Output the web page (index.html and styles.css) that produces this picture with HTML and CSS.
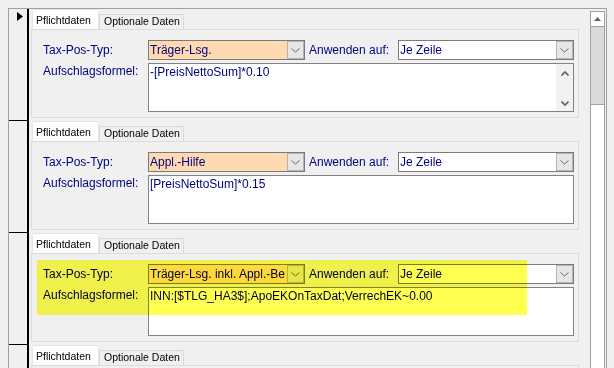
FILE: index.html
```html
<!DOCTYPE html>
<html lang="de">
<head>
    <meta charset="UTF-8">
    <title>Taxpositionen</title>
    <link rel="stylesheet" href="styles.css">
</head>
<body>
    <div class="form">
        <div class="records">

            <!-- record 1 (current) -->
            <div class="record">
                <div class="selector">
                    <svg width="6" height="9" viewBox="0 0 6 9"><polygon points="0,0 6,4.5 0,9" fill="#000"/></svg>
                </div>
                <div class="detail">
                    <div class="tabs">
                        <div class="tab active">Pflichtdaten</div>
                        <div class="tab">Optionale Daten</div>
                    </div>
                    <div class="panel">
                        <div class="line">
                            <div class="lbl">Tax-Pos-Typ:</div>
                            <div class="combo peach">
                                <span class="val">Träger-Lsg.</span>
                                <span class="drop"><svg width="9" height="5" viewBox="0 0 9 5"><polyline points="0.5,0.5 4.5,4 8.5,0.5" fill="none" stroke="#6a6a6a" stroke-width="1"/></svg></span>
                            </div>
                            <div class="lbl2">Anwenden auf:</div>
                            <div class="combo wide">
                                <span class="val">Je Zeile</span>
                                <span class="drop"><svg width="9" height="5" viewBox="0 0 9 5"><polyline points="0.5,0.5 4.5,4 8.5,0.5" fill="none" stroke="#6a6a6a" stroke-width="1"/></svg></span>
                            </div>
                        </div>
                        <div class="line">
                            <div class="lbl memo-lbl">Aufschlagsformel:</div>
                            <div class="memo">
                                <div class="txt">-[PreisNettoSum]*0.10</div>
                                <div class="bar">
                                    <svg width="8" height="5" viewBox="0 0 8 5"><polyline points="0.5,4.5 4,1 7.5,4.5" fill="none" stroke="#606060" stroke-width="1.6"/></svg>
                                    <svg width="8" height="5" viewBox="0 0 8 5"><polyline points="0.5,0.5 4,4 7.5,0.5" fill="none" stroke="#606060" stroke-width="1.6"/></svg>
                                </div>
                            </div>
                        </div>
                    </div>
                </div>
            </div>

            <!-- record 2 -->
            <div class="record">
                <div class="selector"></div>
                <div class="detail">
                    <div class="tabs">
                        <div class="tab active">Pflichtdaten</div>
                        <div class="tab">Optionale Daten</div>
                    </div>
                    <div class="panel">
                        <div class="line">
                            <div class="lbl">Tax-Pos-Typ:</div>
                            <div class="combo peach">
                                <span class="val">Appl.-Hilfe</span>
                                <span class="drop"><svg width="9" height="5" viewBox="0 0 9 5"><polyline points="0.5,0.5 4.5,4 8.5,0.5" fill="none" stroke="#6a6a6a" stroke-width="1"/></svg></span>
                            </div>
                            <div class="lbl2">Anwenden auf:</div>
                            <div class="combo wide">
                                <span class="val">Je Zeile</span>
                                <span class="drop"><svg width="9" height="5" viewBox="0 0 9 5"><polyline points="0.5,0.5 4.5,4 8.5,0.5" fill="none" stroke="#6a6a6a" stroke-width="1"/></svg></span>
                            </div>
                        </div>
                        <div class="line">
                            <div class="lbl memo-lbl">Aufschlagsformel:</div>
                            <div class="memo">
                                <div class="txt">[PreisNettoSum]*0.15</div>
                            </div>
                        </div>
                    </div>
                </div>
            </div>

            <!-- record 3 (marked) -->
            <div class="record">
                <div class="selector"></div>
                <div class="detail">
                    <div class="tabs">
                        <div class="tab active">Pflichtdaten</div>
                        <div class="tab">Optionale Daten</div>
                    </div>
                    <div class="panel">
                        <div class="line">
                            <div class="lbl">Tax-Pos-Typ:</div>
                            <div class="combo peach">
                                <span class="val">Träger-Lsg. inkl. Appl.-Be</span>
                                <span class="drop"><svg width="9" height="5" viewBox="0 0 9 5"><polyline points="0.5,0.5 4.5,4 8.5,0.5" fill="none" stroke="#6a6a6a" stroke-width="1"/></svg></span>
                            </div>
                            <div class="lbl2">Anwenden auf:</div>
                            <div class="combo wide">
                                <span class="val">Je Zeile</span>
                                <span class="drop"><svg width="9" height="5" viewBox="0 0 9 5"><polyline points="0.5,0.5 4.5,4 8.5,0.5" fill="none" stroke="#6a6a6a" stroke-width="1"/></svg></span>
                            </div>
                        </div>
                        <div class="line">
                            <div class="lbl memo-lbl">Aufschlagsformel:</div>
                            <div class="memo">
                                <div class="txt">INN:[$TLG_HA3$];ApoEKOnTaxDat;VerrechEK~0.00</div>
                            </div>
                        </div>
                        <div class="marker"></div>
                    </div>
                </div>
            </div>

            <!-- record 4 (cut off) -->
            <div class="record">
                <div class="selector"></div>
                <div class="detail">
                    <div class="tabs">
                        <div class="tab active">Pflichtdaten</div>
                        <div class="tab">Optionale Daten</div>
                    </div>
                    <div class="panel"></div>
                </div>
            </div>

        </div>

        <div class="vscroll">
            <div class="vs-up">
                <svg width="7" height="4" viewBox="0 0 7 4"><polygon points="0,4 3.5,0 7,4" fill="#606060"/></svg>
            </div>
            <div class="vs-track"></div>
            <div class="vs-thumb"></div>
        </div>
    </div>
</body>
</html>
```

FILE: styles.css
```css
/* Access-style continuous form: one record per block, tab control inside */
* {
    box-sizing: border-box;
}

html, body {
    height: 368px;
    overflow: hidden;
}

body {
    margin: 0;
    background: #f0f0f0;
    font-family: "Liberation Sans", Arial, sans-serif;
    font-size: 12px;
    color: #000080;
}

.form {
    display: flex;
    width: 599px;
    height: 360px;
    margin: 8px 0 0 8px;
    border: 1px solid #a0a0a0;
    border-bottom: none;
    overflow: hidden;
}

.records {
    width: 581px;
    height: 359px;
    overflow: hidden;
}

.record {
    display: flex;
    height: 112px;
}

/* record selector column */
.selector {
    width: 20px;
    padding: 3px 0 0 8px;
    border-right: 2px solid #000;
    border-bottom: 1px solid #000;
}

.selector svg {
    display: block;
}

.detail {
    flex: 1;
    padding-left: 2px;
}

/* tab strip */
.tabs {
    display: flex;
    align-items: flex-end;
    height: 20px;
    padding-left: 1px;
}

.tab {
    width: 85px;
    height: 15px;
    padding-left: 4px;
    background: #f0f0f0;
    border: 1px solid #d9d9d9;
    border-bottom: none;
    color: #000;
    font-size: 10.5px;
    line-height: 12px;
    white-space: nowrap;
}

.tab.active {
    width: 67px;
    height: 20px;
    padding: 3px 0 0 3px;
    background: #fff;
    border-color: #e6e6e6;
    line-height: 14px;
}

.panel {
    position: relative;
    width: 548px;
    height: 89px;
    padding: 10px 0 0 11px;
    border: 1px solid #dcdcdc;
}

.line {
    display: flex;
    align-items: flex-start;
}

.line + .line {
    margin-top: 3px;
}

.lbl {
    width: 105px;
    line-height: 20px;
    white-space: nowrap;
}

.memo-lbl {
    padding-top: 1px;
    line-height: 14px;
}

.lbl2 {
    width: 93px;
    padding-left: 4px;
    line-height: 20px;
    white-space: nowrap;
}

/* combo boxes */
.combo {
    display: flex;
    width: 157px;
    height: 20px;
    background: #fff;
    border: 1px solid #7a7a7a;
}

.combo.wide {
    width: 176px;
}

.combo.peach {
    background: #ffd9b0;
}

.combo .val {
    flex: 1;
    padding-left: 1px;
    line-height: 18px;
    white-space: nowrap;
    overflow: hidden;
}

.combo .drop {
    display: flex;
    align-items: center;
    justify-content: center;
    width: 17px;
    height: 18px;
    background: #e6e6e6;
    border: 1px solid #b4b4b4;
}

/* memo field */
.memo {
    display: flex;
    width: 426px;
    height: 49px;
    background: #fff;
    border: 1px solid #828282;
}

.memo .txt {
    flex: 1;
    padding: 1px 0 0 1px;
    line-height: 14px;
    white-space: nowrap;
    overflow: hidden;
}

.memo .bar {
    display: flex;
    flex-direction: column;
    justify-content: space-between;
    align-items: center;
    width: 17px;
    padding: 7px 0 5px;
    background: #f2f2f2;
}

/* yellow marker drawn over record 3 */
.marker {
    position: absolute;
    left: 5px;
    top: 6px;
    width: 490px;
    height: 55px;
    background: #ffff50;
    mix-blend-mode: multiply;
}

/* form scrollbar */
.vscroll {
    display: flex;
    flex-direction: column;
    width: 15px;
    margin: 2px 1px 0 0;
    border: 1px solid #a0a0a0;
    border-bottom: none;
}

.vs-up {
    display: flex;
    align-items: center;
    justify-content: center;
    height: 15px;
    background: #fff;
    border-bottom: 1px solid #a0a0a0;
}

.vs-track {
    height: 77px;
    background: #d9d9d9;
}

.vs-thumb {
    flex: 1;
    background: #fff;
    border-top: 1px solid #a0a0a0;
}
```
